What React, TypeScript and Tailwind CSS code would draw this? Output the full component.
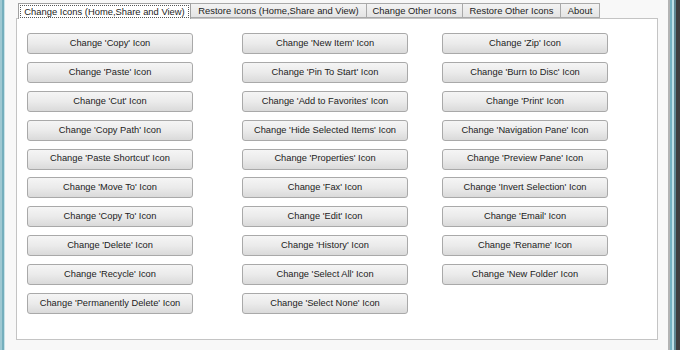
const col1 = ['Copy', 'Paste', 'Cut', 'Copy Path', 'Paste Shortcut', 'Move To', 'Copy To', 'Delete', 'Recycle', 'Permanently Delete'];
const col2 = ['New Item', 'Pin To Start', 'Add to Favorites', 'Hide Selected Items', 'Properties', 'Fax', 'Edit', 'History', 'Select All', 'Select None'];
const col3 = ['Zip', 'Burn to Disc', 'Print', 'Navigation Pane', 'Preview Pane', 'Invert Selection', 'Email', 'Rename', 'New Folder'];

const tabs = [
  { label: 'Change Icons (Home,Share and View)', w: 'w-[173px]' },
  { label: 'Restore Icons (Home,Share and View)', w: 'w-[176px]' },
  { label: 'Change Other Icons', w: 'w-[96px]' },
  { label: 'Restore Other Icons', w: 'w-[98px]' },
  { label: 'About', w: 'w-[39px]' },
];

function IconButton({ name }: { name: string }) {
  return (
    <button className="h-[21px] w-[166px] shrink-0 whitespace-nowrap rounded-[3px] border border-[#a9a9a9] bg-gradient-to-b from-[#f5f5f5] via-[#ebebeb] to-[#dadada] text-[9.3px] leading-none text-[#222]">
      Change '{name}' Icon
    </button>
  );
}

function Column({ items }: { items: string[] }) {
  return (
    <div className="flex flex-col gap-[7.9px]">
      {items.map((n) => (
        <IconButton key={n} name={n} />
      ))}
    </div>
  );
}

export default function App() {
  return (
    <div
      className="flex h-[350px] w-[680px] overflow-hidden"
      style={{ fontFamily: '"Liberation Sans", Arial, sans-serif' }}
    >
      {/* left window frame */}
      <div className="flex h-full w-[5px] shrink-0">
        <div className="w-[2px] bg-[#9fc9d3]" />
        <div className="w-[2px] bg-[#75afbd]" />
        <div className="w-[1px] bg-[#c9e2e8]" />
      </div>

      <div className="flex flex-1 flex-col bg-[#f8f8f8] pl-[11px] pt-[3px]">
        {/* tab strip */}
        <div className="relative z-10 flex h-[15px] pl-[2px]">
          {tabs.map((t, i) => (
            <div
              key={t.label}
              className={
                i === 0
                  ? `${t.w} flex h-[16px] items-center justify-center border border-b-0 border-[#a0a0a0] bg-white px-[1px]`
                  : `${t.w} flex h-[15px] items-center justify-center whitespace-nowrap border border-l-0 border-[#a9a9a9] bg-gradient-to-b from-[#f3f3f3] to-[#e4e4e4] text-[9.4px] text-[#222]`
              }
            >
              {i === 0 ? (
                <span className="flex h-[13px] w-full items-center justify-center whitespace-nowrap border border-dotted border-[#555] text-[9.4px] leading-none text-[#222]">
                  {t.label}
                </span>
              ) : (
                <span className="leading-none">{t.label}</span>
              )}
            </div>
          ))}
        </div>

        {/* tab panel */}
        <div className="flex h-[322px] w-[642px] border border-[#c4c4c4] bg-white pl-[10px] pt-[14px]">
          <Column items={col1} />
          <div className="ml-[49px]">
            <Column items={col2} />
          </div>
          <div className="ml-[34px]">
            <Column items={col3} />
          </div>
        </div>
      </div>

      {/* right window frame */}
      <div className="flex h-full w-[12px] shrink-0">
        <div className="w-[2px] bg-[#b4b4b4]" />
        <div className="w-[2px] bg-[#74b3c3]" />
        <div className="w-[2px] bg-[#bfe0e7]" />
        <div className="w-[2px] bg-[#5e8792]" />
        <div className="w-[4px] bg-[#3e3e3e]" />
      </div>
    </div>
  );
}
